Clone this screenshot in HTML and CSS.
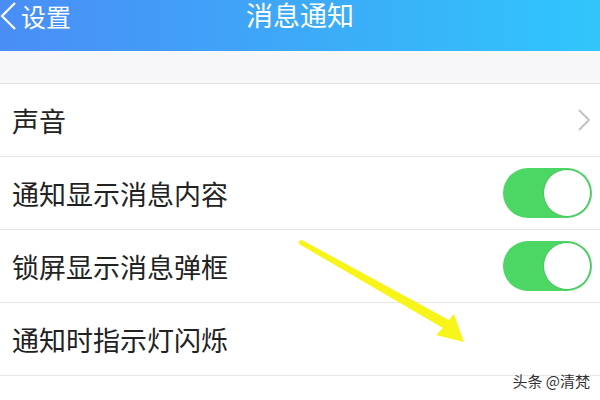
FILE: index.html
```html
<!DOCTYPE html>
<html lang="zh">
<head>
  <meta charset="UTF-8" />
  <title>消息通知</title>
  <link rel="stylesheet" href="styles.css">
</head>
<body>
  <div class="page">
    <div class="header">
      <div class="back">
        <svg width="18" height="28" viewBox="0 0 18 28"><polyline points="15,1 2,14 15,27" fill="none" stroke="#fff" stroke-width="2.2"/></svg>
        <span>设置</span>
      </div>
      <div class="title">消息通知</div>
    </div>

    <div class="gap"></div>

    <div class="list">
      <div class="row">
        <span class="label">声音</span>
        <svg class="chevron" width="12" height="22" viewBox="0 0 12 22"><polyline points="1,1 11,11 1,21" fill="none" stroke="#c4c4c8" stroke-width="2"/></svg>
      </div>
      <div class="row">
        <span class="label">通知显示消息内容</span>
        <div class="toggle"><div class="knob"></div></div>
      </div>
      <div class="row">
        <span class="label">锁屏显示消息弹框</span>
        <div class="toggle"><div class="knob"></div></div>
      </div>
      <div class="row">
        <span class="label">通知时指示灯闪烁</span>
      </div>
    </div>

    <svg class="arrow" width="600" height="400" viewBox="0 0 600 400">
      <polygon points="299,241 302,240 449,320 454,314 464,342 436,335 443,328 299,244" fill="#f7f41a"/>
    </svg>

    <div class="watermark">头条 @清梵</div>
  </div>
</body>
</html>
```

FILE: styles.css
```css
body {
  margin: 0;
  font-family: "Noto Sans CJK SC", "Noto Sans", sans-serif;
  background-color: #fff;
}

.page {
  position: relative;
  width: 600px;
  height: 400px;
  overflow: hidden;
}

.header {
  height: 51px;
  background: linear-gradient(90deg, #4a8df6, #30c6fb);
  color: #fff;
  position: relative;
  display: flex;
  justify-content: center;
}

.back {
  position: absolute;
  left: 0;
  top: 2px;
  display: flex;
  align-items: center;
  gap: 3px;
  font-size: 25px;
  line-height: 28px;
}

.title {
  font-size: 27px;
  line-height: 30px;
  padding-top: 0;
}

.gap {
  height: 32px;
  background-color: #f7f7f9;
  border-bottom: 1px solid #e4e4e6;
}

.row {
  height: 72px;
  border-bottom: 1px solid #e6e6e8;
  display: flex;
  align-items: center;
  justify-content: space-between;
  padding: 0 8px 0 12px;
}

.label {
  font-size: 27px;
  color: #222;
}

.chevron {
  margin-right: 2px;
}

.toggle {
  width: 89px;
  height: 50px;
  border-radius: 25px;
  background-color: #4cd664;
  display: flex;
  justify-content: flex-end;
  align-items: center;
  padding-right: 1px;
  box-sizing: border-box;
}

.knob {
  width: 48px;
  height: 48px;
  border-radius: 50%;
  background-color: #fff;
  box-sizing: border-box;
  border: 1px solid #45c45b;
}

.arrow {
  position: absolute;
  left: 0;
  top: 0;
}

.watermark {
  position: absolute;
  right: 10px;
  bottom: 9px;
  font-size: 15px;
  color: #333;
  text-shadow: 0 0 3px #fff;
}
```
